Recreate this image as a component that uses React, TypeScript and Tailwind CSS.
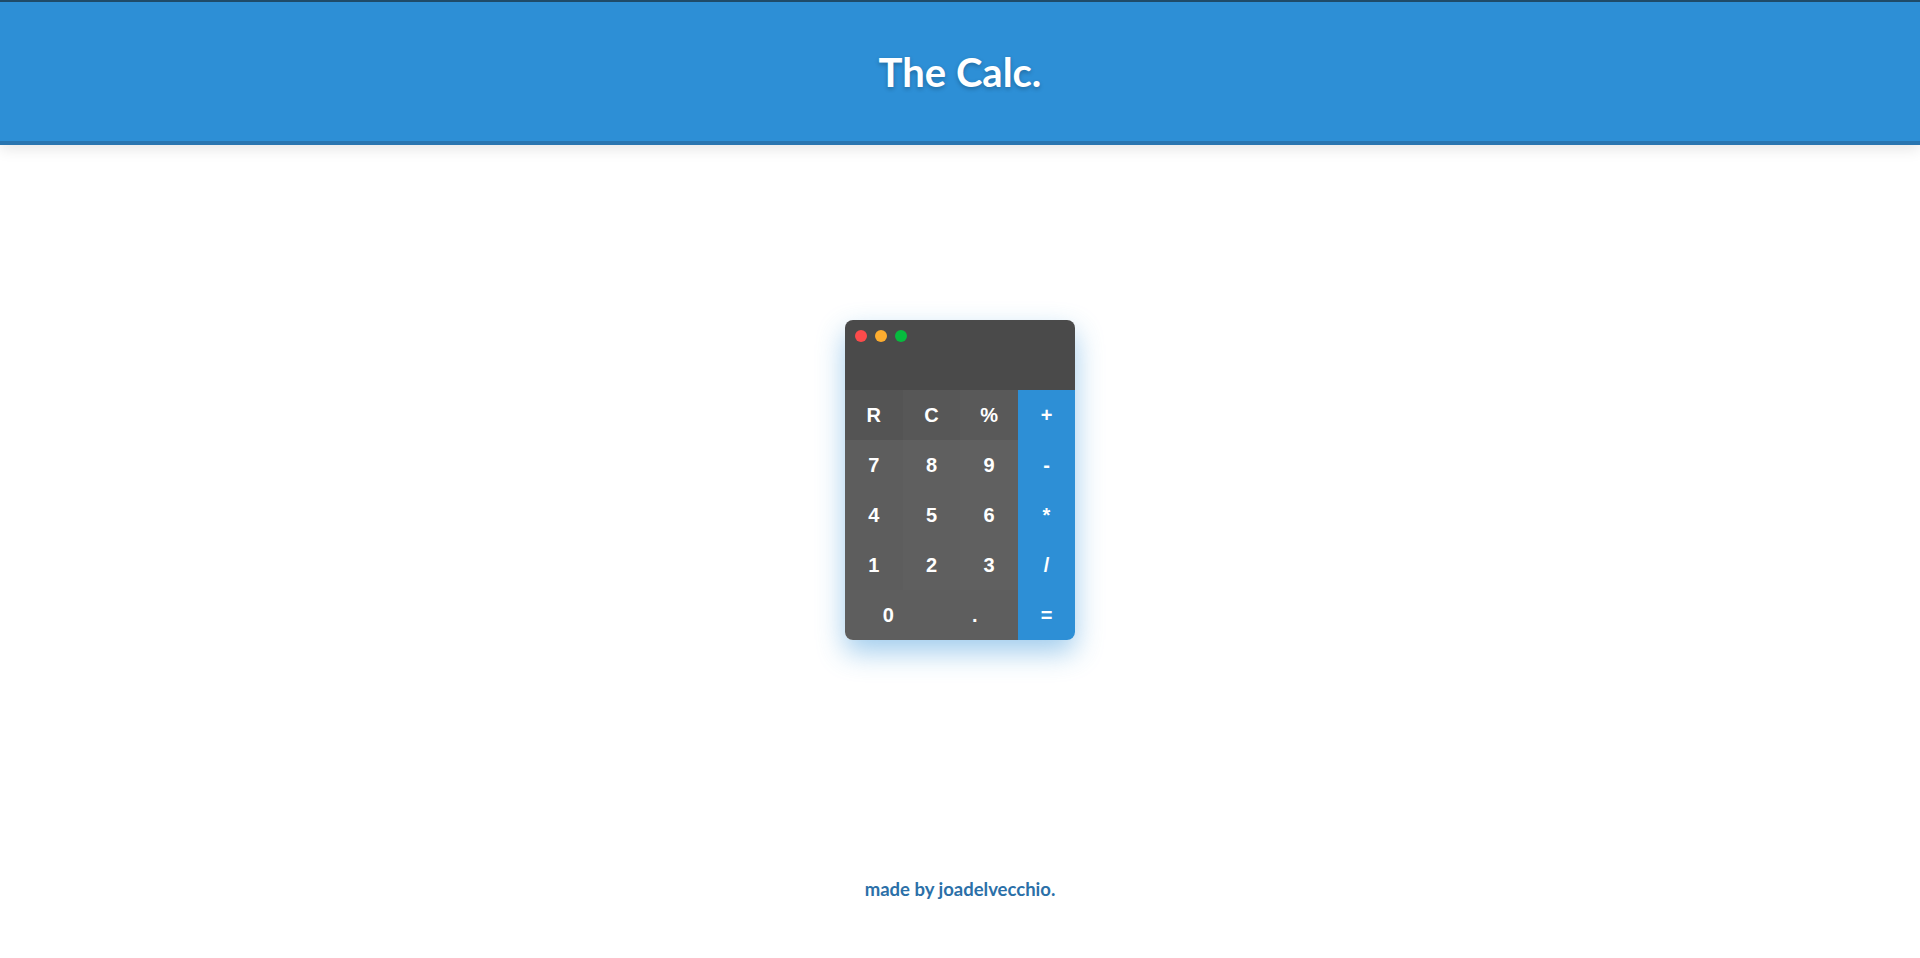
import React from "react";

const fn = [
  { k: "R", bg: "bg-[#545454]" },
  { k: "C", bg: "bg-[#575757]" },
  { k: "%", bg: "bg-[#595959]" },
];

const digitRows = [
  ["7", "8", "9"],
  ["4", "5", "6"],
  ["1", "2", "3"],
];

const ops = ["+", "-", "*", "/", "="];

export default function App() {
  return (
    <div
      className="h-screen w-full flex flex-col bg-white overflow-hidden border-t-2 border-[#1f4b69]"
      style={{ fontFamily: "Lato, 'Liberation Sans', sans-serif" }}
    >
      <header className="h-[143px] shrink-0 bg-[#2d8fd6] border-b-4 border-[#2975b0] flex items-center justify-center shadow-[0_4px_14px_rgba(0,0,0,0.10)] relative z-10">
        <h1 className="text-[40px] font-bold text-white leading-none [text-shadow:0_2px_4px_rgba(0,0,0,0.25)]">
          The Calc.
        </h1>
      </header>

      <main className="h-[670px] shrink-0 flex items-center justify-center">
        <div
          className="w-[230px] rounded-lg overflow-hidden shadow-[0_12px_28px_rgba(45,143,214,0.45)] flex flex-col"
          style={{ fontFamily: "'Liberation Sans', Arial, sans-serif" }}
        >
          <div className="h-[70px] bg-[#4a4a4a] flex items-start gap-2 px-[10px] pt-[10px]">
            <span className="w-3 h-3 rounded-full bg-[#fc4b4b]" />
            <span className="w-3 h-3 rounded-full bg-[#fdad2f]" />
            <span className="w-3 h-3 rounded-full bg-[#06bb3e]" />
          </div>
          <div className="flex">
            <div className="flex-1 flex flex-col">
              <div className="flex h-[50px]">
                {fn.map((b) => (
                  <div
                    key={b.k}
                    className={`flex-1 flex items-center justify-center text-white font-bold text-[20px] ${b.bg}`}
                  >
                    {b.k}
                  </div>
                ))}
              </div>
              {digitRows.map((row, i) => (
                <div key={i} className="flex h-[50px]">
                  {row.map((d, j) => (
                    <div
                      key={d}
                      className={`flex-1 flex items-center justify-center text-white font-bold text-[20px] ${
                        j === 0 ? "bg-[#5d5d5d]" : j === 1 ? "bg-[#5f5f5f]" : "bg-[#606060]"
                      }`}
                    >
                      {d}
                    </div>
                  ))}
                </div>
              ))}
              <div className="flex h-[50px] bg-[#5e5e5e]">
                <div className="flex-1 flex items-center justify-center text-white font-bold text-[20px]">
                  0
                </div>
                <div className="flex-1 flex items-center justify-center text-white font-bold text-[20px]">
                  .
                </div>
              </div>
            </div>
            <div className="w-[57px] bg-[#2d8fd6] flex flex-col">
              {ops.map((o) => (
                <div
                  key={o}
                  className="h-[50px] flex items-center justify-center text-white font-bold text-[20px]"
                >
                  {o}
                </div>
              ))}
            </div>
          </div>
        </div>
      </main>

      <footer className="flex-1 flex justify-center pt-[65px]">
        <p className="text-[18.5px] font-bold text-[#2b70a8] leading-none">made by joadelvecchio.</p>
      </footer>
    </div>
  );
}
